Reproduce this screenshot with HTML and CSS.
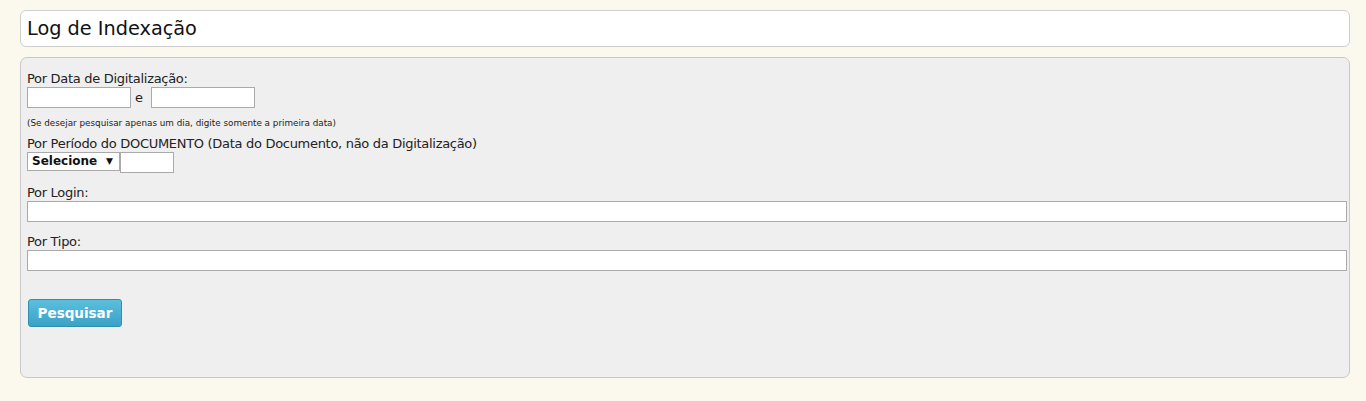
FILE: index.html
```html
<!DOCTYPE html>
<html lang="pt">
<head>
<meta charset="utf-8">
<title>Log de Indexação</title>
<link rel="stylesheet" href="styles.css">
</head>
<body>
<div class="page">
  <div class="title-box"><h1>Log de Indexação</h1></div>
  <form class="panel">
    <div class="label">Por Data de Digitalização:</div>
    <div class="row">
      <input class="date" type="text"><span class="sep">e</span><input class="date" type="text">
    </div>
    <div class="hint">(Se desejar pesquisar apenas um dia, digite somente a primeira data)</div>
    <div class="label">Por Período do DOCUMENTO (Data do Documento, não da Digitalização)</div>
    <div class="row">
      <div class="select">Selecione<span class="arrow">▼</span></div><input class="small" type="text">
    </div>
    <div class="label gap">Por Login:</div>
    <input class="full" type="text">
    <div class="label gap">Por Tipo:</div>
    <input class="full" type="text">
    <div class="actions"><button type="button" class="btn">Pesquisar</button></div>
  </form>
</div>
</body>
</html>
```
FILE: styles.css
```css
html, body { margin: 0; padding: 0; }
body {
  background: #fbf8ee;
  font-family: "DejaVu Sans", Verdana, sans-serif;
  color: #222;
}
.page { padding: 10px 16px 0 20px; }
.title-box {
  background: #fff;
  border: 1px solid #cfcfcf;
  border-radius: 6px;
  height: 35px;
  display: flex;
  align-items: center;
  padding-left: 6px;
}
.title-box h1 {
  margin: 0;
  font-weight: normal;
  font-size: 19.3px;
  color: #111;
}
.panel {
  margin-top: 10px;
  background: #efefef;
  border: 1px solid #c8c8c8;
  border-radius: 7px;
  height: 321px;
  padding: 12px 2px 0 6px;
  box-sizing: border-box;
  display: flex;
  flex-direction: column;
  align-items: flex-start;
}
.label { font-size: 13px; line-height: 17px; color: #222; letter-spacing: -0.3px; }
.label.gap { margin-top: 11px; }
.row { display: flex; align-items: flex-start; }
input {
  margin: 0;
  border: 1px solid #aaa;
  background: #fff;
  box-sizing: border-box;
  height: 21px;
  padding: 0;
}
.date { width: 104px; }
.sep { width: 20px; text-align: left; padding-left: 4px; box-sizing: border-box; font-size: 13px; line-height: 21px; }
.hint { font-size: 8.8px; margin-top: 8px; margin-bottom: 5px; line-height: 14px; color: #222; }
.select {
  width: 93px; height: 19px;
  box-sizing: border-box;
  border: 1px solid #aaa;
  background: #fff;
  font-weight: bold;
  font-size: 12px;
  line-height: 17px;
  padding-left: 4px;
  position: relative;
  color: #111;
}
.arrow { position: absolute; right: 6px; top: 0; font-size: 9px; }
.small { width: 54px; }
.full { width: 100%; }
.actions { margin-top: 28px; margin-left: 1px; }
.btn {
  width: 94px; height: 28px;
  border: 1px solid #2e8fae;
  border-radius: 3px;
  background: linear-gradient(#5bbfdf, #3aa2c6);
  color: #fff;
  font-family: "DejaVu Sans", Verdana, sans-serif;
  font-weight: bold;
  font-size: 13.5px;
  padding: 0;
}
```
